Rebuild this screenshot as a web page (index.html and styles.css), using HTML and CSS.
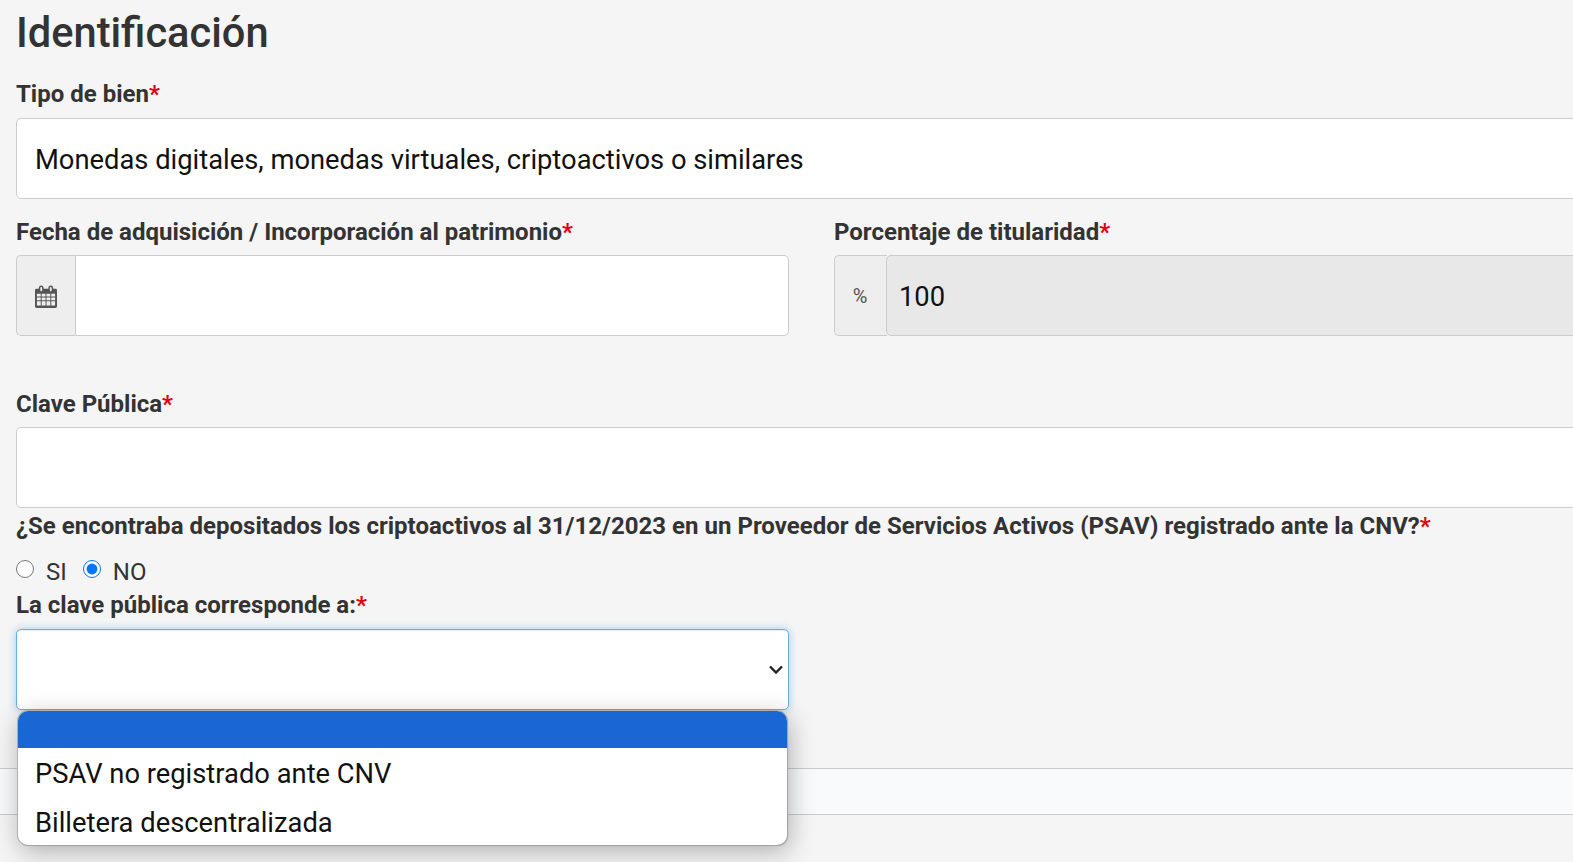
FILE: index.html
```html
<!DOCTYPE html>
<html lang="es">
<head>
<meta charset="utf-8">
<title>Identificación</title>
<link rel="stylesheet" href="styles.css">
</head>
<body>
<main class="page">
  <form class="form">
    <h2 class="title">Identificación</h2>
    <div class="field field-first">
      <label class="label">Tipo de bien<span class="req">*</span></label>
      <div class="control">Monedas digitales, monedas virtuales, criptoactivos o similares</div>
    </div>
    <div class="cols">
      <div class="field">
        <label class="label">Fecha de adquisición / Incorporación al patrimonio<span class="req">*</span></label>
        <div class="group">
          <span class="addon addon-cal">
            <svg class="cal" viewBox="0 0 23 24" width="22" height="23" aria-hidden="true">
              <path fill="#555" d="M1.5 4H4V3a2.5 2.5 0 0 1 5 0v1h5V3a2.5 2.5 0 0 1 5 0v1h2.5A1.5 1.5 0 0 1 23 5.5v17a1.5 1.5 0 0 1-1.5 1.5h-20A1.5 1.5 0 0 1 0 22.500v-17A1.500 1.500 0 0 1 1.500 4z"/>
              <path fill="#eee" d="M5.500 3a1 1 0 0 1 2 0v2.500a1 1 0 0 1-2 0zM15.500 3a1 1 0 0 1 2 0v2.500a1 1 0 0 1-2 0zM2 9h4v3H2zM7 9h4v3H7zM12 9h4v3h-4zM17 9h4v3h-4zM2 13h4v3H2zM7 13h4v3H7zM12 13h4v3h-4zM17 13h4v3h-4zM2 17h4v4.500H2zM7 17h4v4.500H7zM12 17h4v4.500h-4zM17 17h4v4.500h-4z"/>
            </svg>
          </span>
          <div class="control control-joined"></div>
        </div>
      </div>
      <div class="field">
        <label class="label">Porcentaje de titularidad<span class="req">*</span></label>
        <div class="group">
          <span class="addon addon-pct">%</span>
          <div class="control control-joined control-disabled">100</div>
        </div>
      </div>
    </div>
    <div class="field field-key">
      <label class="label">Clave Pública<span class="req">*</span></label>
      <div class="control"></div>
    </div>
    <div class="field field-question">
      <label class="label">¿Se encontraba depositados los criptoactivos al 31/12/2023 en un Proveedor de Servicios Activos (PSAV) registrado ante la CNV?<span class="req">*</span></label>
      <div class="radios">
        <label class="radio"><input type="radio" name="psav"> SI</label>
        <label class="radio"><input type="radio" name="psav" checked> NO</label>
      </div>
    </div>
    <div class="field field-select">
      <label class="label">La clave pública corresponde a:<span class="req">*</span></label>
      <div class="select">
        <svg class="chevron" viewBox="0 0 14 9" width="14" height="9" aria-hidden="true"><path d="M1 1.500l6 6 6-6" fill="none" stroke="#222" stroke-width="2.400"/></svg>
        <ul class="menu">
          <li class="option option-active"></li>
          <li class="option">PSAV no registrado ante CNV</li>
          <li class="option">Billetera descentralizada</li>
        </ul>
      </div>
    </div>
  </form>
  <div class="strip"></div>
</main>
</body>
</html>
```
FILE: styles.css
```css
* { box-sizing: border-box; }
html, body { margin: 0; height: 100%; overflow: hidden; }
body {
  background: #f5f5f5;
  color: #333;
  font-family: Roboto, "Liberation Sans", sans-serif;
}
.page { width: 1900px; height: 862px; }
.form { padding: 0 16px; }
.title {
  margin: 0;
  height: 66px;
  font-size: 41.6px;
  line-height: 66px;
  font-weight: 500;
}
.field { display: flex; flex-direction: column; }
.label {
  display: block;
  font-size: 24px;
  line-height: 34px;
  font-weight: 700;
  height: 34px;
}
.req { color: #e3000f; }
.field-first { margin-top: 11px; }
.field-first .label { height: 41px; }
.control {
  height: 81px;
  flex: none;
  border: 1px solid #ccc;
  border-radius: 5px;
  background: #fff;
  color: #111;
  font-size: 27.33px;
  line-height: 83px;
  padding: 0 18px;
}
.cols {
  display: grid;
  grid-template-columns: 773px 1040px;
  column-gap: 45px;
  margin-top: 16px;
}
.cols .label { height: 40px; }
.group { display: flex; height: 81px; }
.addon {
  display: flex;
  align-items: center;
  justify-content: center;
  background: #eee;
  border: 1px solid #ccc;
  border-right: 0;
  border-radius: 5px 0 0 5px;
  color: #555;
}
.addon-cal { width: 59px; flex: none; padding-top: 2px; }
.addon-pct { width: 53px; flex: none; font-size: 20px; padding-right: 2px; }
.control-joined { border-radius: 0 5px 5px 0; flex: 1; }
.control-disabled {
  background: #e8e8e8;
  border-radius: 5px;
  padding: 0 12px;
  color: #111;
  margin-left: -1px;
}
.field-key { margin-top: 51px; }
.field-key .label { height: 40px; }
.field-question .label { margin-top: 1px; height: 34px; letter-spacing: .015px; }
.radios {
  display: flex;
  gap: 16px;
  height: 44px;
  align-items: flex-end;
}
.radio {
  display: flex;
  align-items: center;
  font-size: 24px;
  line-height: 30px;
  color: #333;
  gap: 12px;
}
.radio input {
  width: 18px;
  height: 18px;
  margin: -6px 0 0;
}
.field-select { margin-top: 2px; }
.field-select .label { height: 40px; line-height: 32px; }
.select {
  position: relative;
  width: 773px;
  height: 81px;
  background: #fff;
  border: 1px solid #66afe9;
  border-radius: 5px;
  box-shadow: inset 0 1px 1px rgba(0,0,0,.075), 0 0 8px rgba(102,175,233,.6);
}
.chevron { position: absolute; right: 5px; top: 35px; }
.menu {
  position: absolute;
  z-index: 2;
  top: 81px;
  left: 1px;
  width: 769px;
  height: 134px;
  margin: 0;
  padding: 0;
  list-style: none;
  background: #fff;
  border-radius: 10px;
  overflow: hidden;
  box-shadow: 1px 1px 1px #a5a5a5, 0 0 0 1px #b0b0b0, 2px 6px 26px rgba(0,0,0,.3);
}
.option {
  height: 49px;
  padding: 0 17px;
  color: #111;
  font-size: 27.33px;
  line-height: 53px;
}
.option-active { background: #1a66d2; height: 37px; }
.strip {
  margin-top: 58px;
  height: 47px;
  background: #f9fafc;
  border-top: 1px solid #ccc;
  border-bottom: 1px solid #ccc;
}
```
